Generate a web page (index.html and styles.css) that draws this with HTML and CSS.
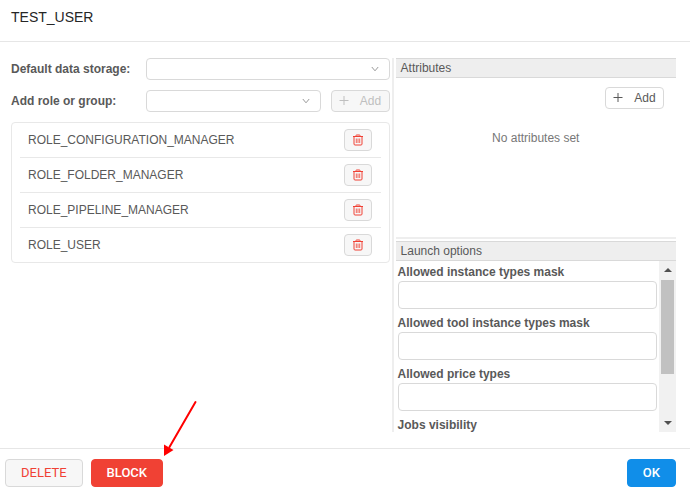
FILE: index.html
```html
<!DOCTYPE html>
<html lang="en">
<head>
<meta charset="utf-8">
<title>TEST_USER</title>
<link rel="stylesheet" href="styles.css">
</head>
<body>
<svg class="sprite" aria-hidden="true">
  <symbol id="plus" viewBox="0 0 10 10"><path d="M0.500 4.500h9M5 0v9" fill="none" stroke="currentColor"/></symbol>
  <symbol id="chevron" viewBox="0 0 8 6"><path d="M0.800 1l3.200 3.800 3.200-3.800" fill="none" stroke="currentColor"/></symbol>
  <symbol id="trash" viewBox="0 0 12 12"><path d="M1 2.500h10M4 2.500v-1q0-.5.5-.5h3q.5 0 .5.500v1M2 2.500v7.500q0 1 1 1h6q1 0 1-1v-7.500" fill="none" stroke="currentColor"/><path d="M4.300 4.500v4.500M6 4.500v4.500M7.700 4.500v4.500" fill="none" stroke="currentColor" stroke-width=".8"/></symbol>
</svg>
<div class="dialog">
  <header class="header"><h1 class="title">TEST_USER</h1></header>
  <main class="body">
    <section class="roles">
      <div class="row">
        <label class="label" for="storage">Default data storage:</label>
        <div class="select"><select id="storage"><option></option></select><svg class="chevron"><use href="#chevron"/></svg></div>
      </div>
      <div class="row">
        <label class="label" for="role">Add role or group:</label>
        <div class="select"><select id="role"><option></option></select><svg class="chevron"><use href="#chevron"/></svg></div>
        <button class="btn small" disabled><svg class="plus"><use href="#plus"/></svg>Add</button>
      </div>
      <ul class="list">
        <li class="item">ROLE_CONFIGURATION_MANAGER<button class="btn remove" aria-label="Remove"><svg class="trash"><use href="#trash"/></svg></button></li>
        <li class="item">ROLE_FOLDER_MANAGER<button class="btn remove" aria-label="Remove"><svg class="trash"><use href="#trash"/></svg></button></li>
        <li class="item">ROLE_PIPELINE_MANAGER<button class="btn remove" aria-label="Remove"><svg class="trash"><use href="#trash"/></svg></button></li>
        <li class="item">ROLE_USER<button class="btn remove" aria-label="Remove"><svg class="trash"><use href="#trash"/></svg></button></li>
      </ul>
    </section>
    <div class="side">
      <section class="attributes">
        <h2 class="bar">Attributes</h2>
        <div class="actions"><button class="btn small"><svg class="plus"><use href="#plus"/></svg>Add</button></div>
        <p class="empty">No attributes set</p>
      </section>
      <section class="launch">
        <h2 class="bar">Launch options</h2>
        <div class="scroll">
          <form class="fields">
            <label class="field-label" for="mask">Allowed instance types mask</label>
            <input class="input" id="mask" type="text">
            <label class="field-label" for="tool">Allowed tool instance types mask</label>
            <input class="input" id="tool" type="text">
            <label class="field-label" for="price">Allowed price types</label>
            <input class="input" id="price" type="text">
            <span class="field-label">Jobs visibility</span>
          </form>
          <div class="scrollbar" aria-hidden="true">
            <svg class="arrow" viewBox="0 0 17 17"><path d="M5 11h8L9 7z"/></svg>
            <div class="track"><div class="thumb"></div></div>
            <svg class="arrow" viewBox="0 0 17 17"><path d="M5 6h8L9 10z"/></svg>
          </div>
        </div>
      </section>
    </div>
  </main>
  <footer class="footer">
    <button class="btn large delete">DELETE</button>
    <button class="btn large block">BLOCK</button>
    <button class="btn large ok">OK</button>
    <svg class="pointer" viewBox="0 0 36 58" aria-hidden="true"><path d="M32.500 3L6.500 48" stroke="#f00" stroke-width="2" stroke-linecap="round"/><path d="M1 57V45.500L10.500 51z" fill="#f00"/></svg>
  </footer>
</div>
</body>
</html>
```
FILE: styles.css
```css
* { box-sizing: border-box; }
body {
  margin: 0;
  font: 12px/18px "Liberation Sans", Arial, sans-serif;
  color: #595959;
  background: #fff;
}
.sprite { display: none; }
.dialog { display: flex; flex-direction: column; height: 100vh; }
.header { padding: 6px 11px 13px; border-bottom: 1px solid #e6e6e6; }
.title { margin: 0; font-size: 14px; line-height: 22px; font-weight: 400; color: #262626; }
.body { flex: 1; min-height: 0; display: flex; padding: 16px 14px 16px 11px; }
.roles { flex: 382; min-width: 0; padding-right: 2px; }
.row { display: flex; align-items: center; gap: 10px; margin-bottom: 10px; }
.label { width: 125px; font-weight: 700; }
.select { position: relative; flex: 1; }
.select select {
  display: block;
  width: 100%;
  height: 22px;
  appearance: none;
  border: 1px solid #d9d9d9;
  border-radius: 4px;
  background: #fff;
}
.chevron { position: absolute; right: 11px; top: 8px; width: 8px; height: 6px; color: #999; }
.btn {
  display: inline-flex;
  align-items: center;
  justify-content: center;
  padding: 0;
  border: 1px solid #d9d9d9;
  border-radius: 4px;
  background: #fff;
  font: inherit;
  color: #595959;
}
.btn:disabled { background: #f7f7f7; color: #bfbfbf; }
.small { width: 59px; height: 22px; gap: 11px; }
.plus { width: 10px; height: 10px; }
.list { margin: 0; padding: 0 8px; list-style: none; border: 1px solid #e8e8e8; border-radius: 4px; }
.item {
  display: flex;
  align-items: center;
  justify-content: space-between;
  height: 35px;
  padding: 0 9px 0 8px;
  border-bottom: 1px solid #e8e8e8;
}
.item:last-child { height: 34px; border-bottom: 0; }
.remove { width: 28px; height: 22px; background: #f7f7f7; color: #f04134; }
.trash { width: 12px; height: 12px; }
.side { flex: 283; min-width: 0; display: flex; flex-direction: column; padding-left: 2px; border-left: 2px solid #eee; }
.attributes { flex: 180; min-height: 0; border-bottom: 2px solid #eee; margin-bottom: 2px; }
.launch { flex: 192; min-height: 0; display: flex; flex-direction: column; }
.bar {
  margin: 0;
  padding: 0 5px;
  border: solid #d9d9d9;
  border-width: 1px 0;
  background: #eee;
  font-size: 12px;
  font-weight: 400;
}
.actions { display: flex; justify-content: flex-end; padding: 9px 12px; }
.empty { margin: 0; padding: 11px 0; text-align: center; color: #777; }
.scroll { flex: 1; min-height: 0; display: flex; }
.fields { flex: 1; overflow: hidden; padding: 2px; }
.field-label { display: block; font-weight: 700; }
.input {
  display: block;
  width: 100%;
  height: 28px;
  margin-bottom: 5px;
  border: 1px solid #d9d9d9;
  border-radius: 4px;
  background: #fff;
}
.scrollbar { display: flex; flex-direction: column; width: 17px; background: #f1f1f1; }
.arrow { width: 17px; height: 17px; fill: #505050; }
.track { flex: 1; padding: 2px; }
.thumb { height: 71%; background: #c1c1c1; }
.footer {
  position: relative;
  display: flex;
  gap: 8px;
  padding: 10px 14px 7px 5px;
  border-top: 1px solid #e6e6e6;
}
.large { height: 28px; padding: 0 15px; font-family: Roboto, sans-serif; font-size: 13px; font-weight: 500; }
.delete { background: #f7f7f7; color: #f04134; font-weight: 400; }
.block { border-color: #f04134; background: #f04134; color: #fff; }
.ok { margin-left: auto; border-color: #108ee9; background: #108ee9; color: #fff; }
.pointer { position: absolute; left: 163px; bottom: 37px; width: 36px; height: 58px; }
```
